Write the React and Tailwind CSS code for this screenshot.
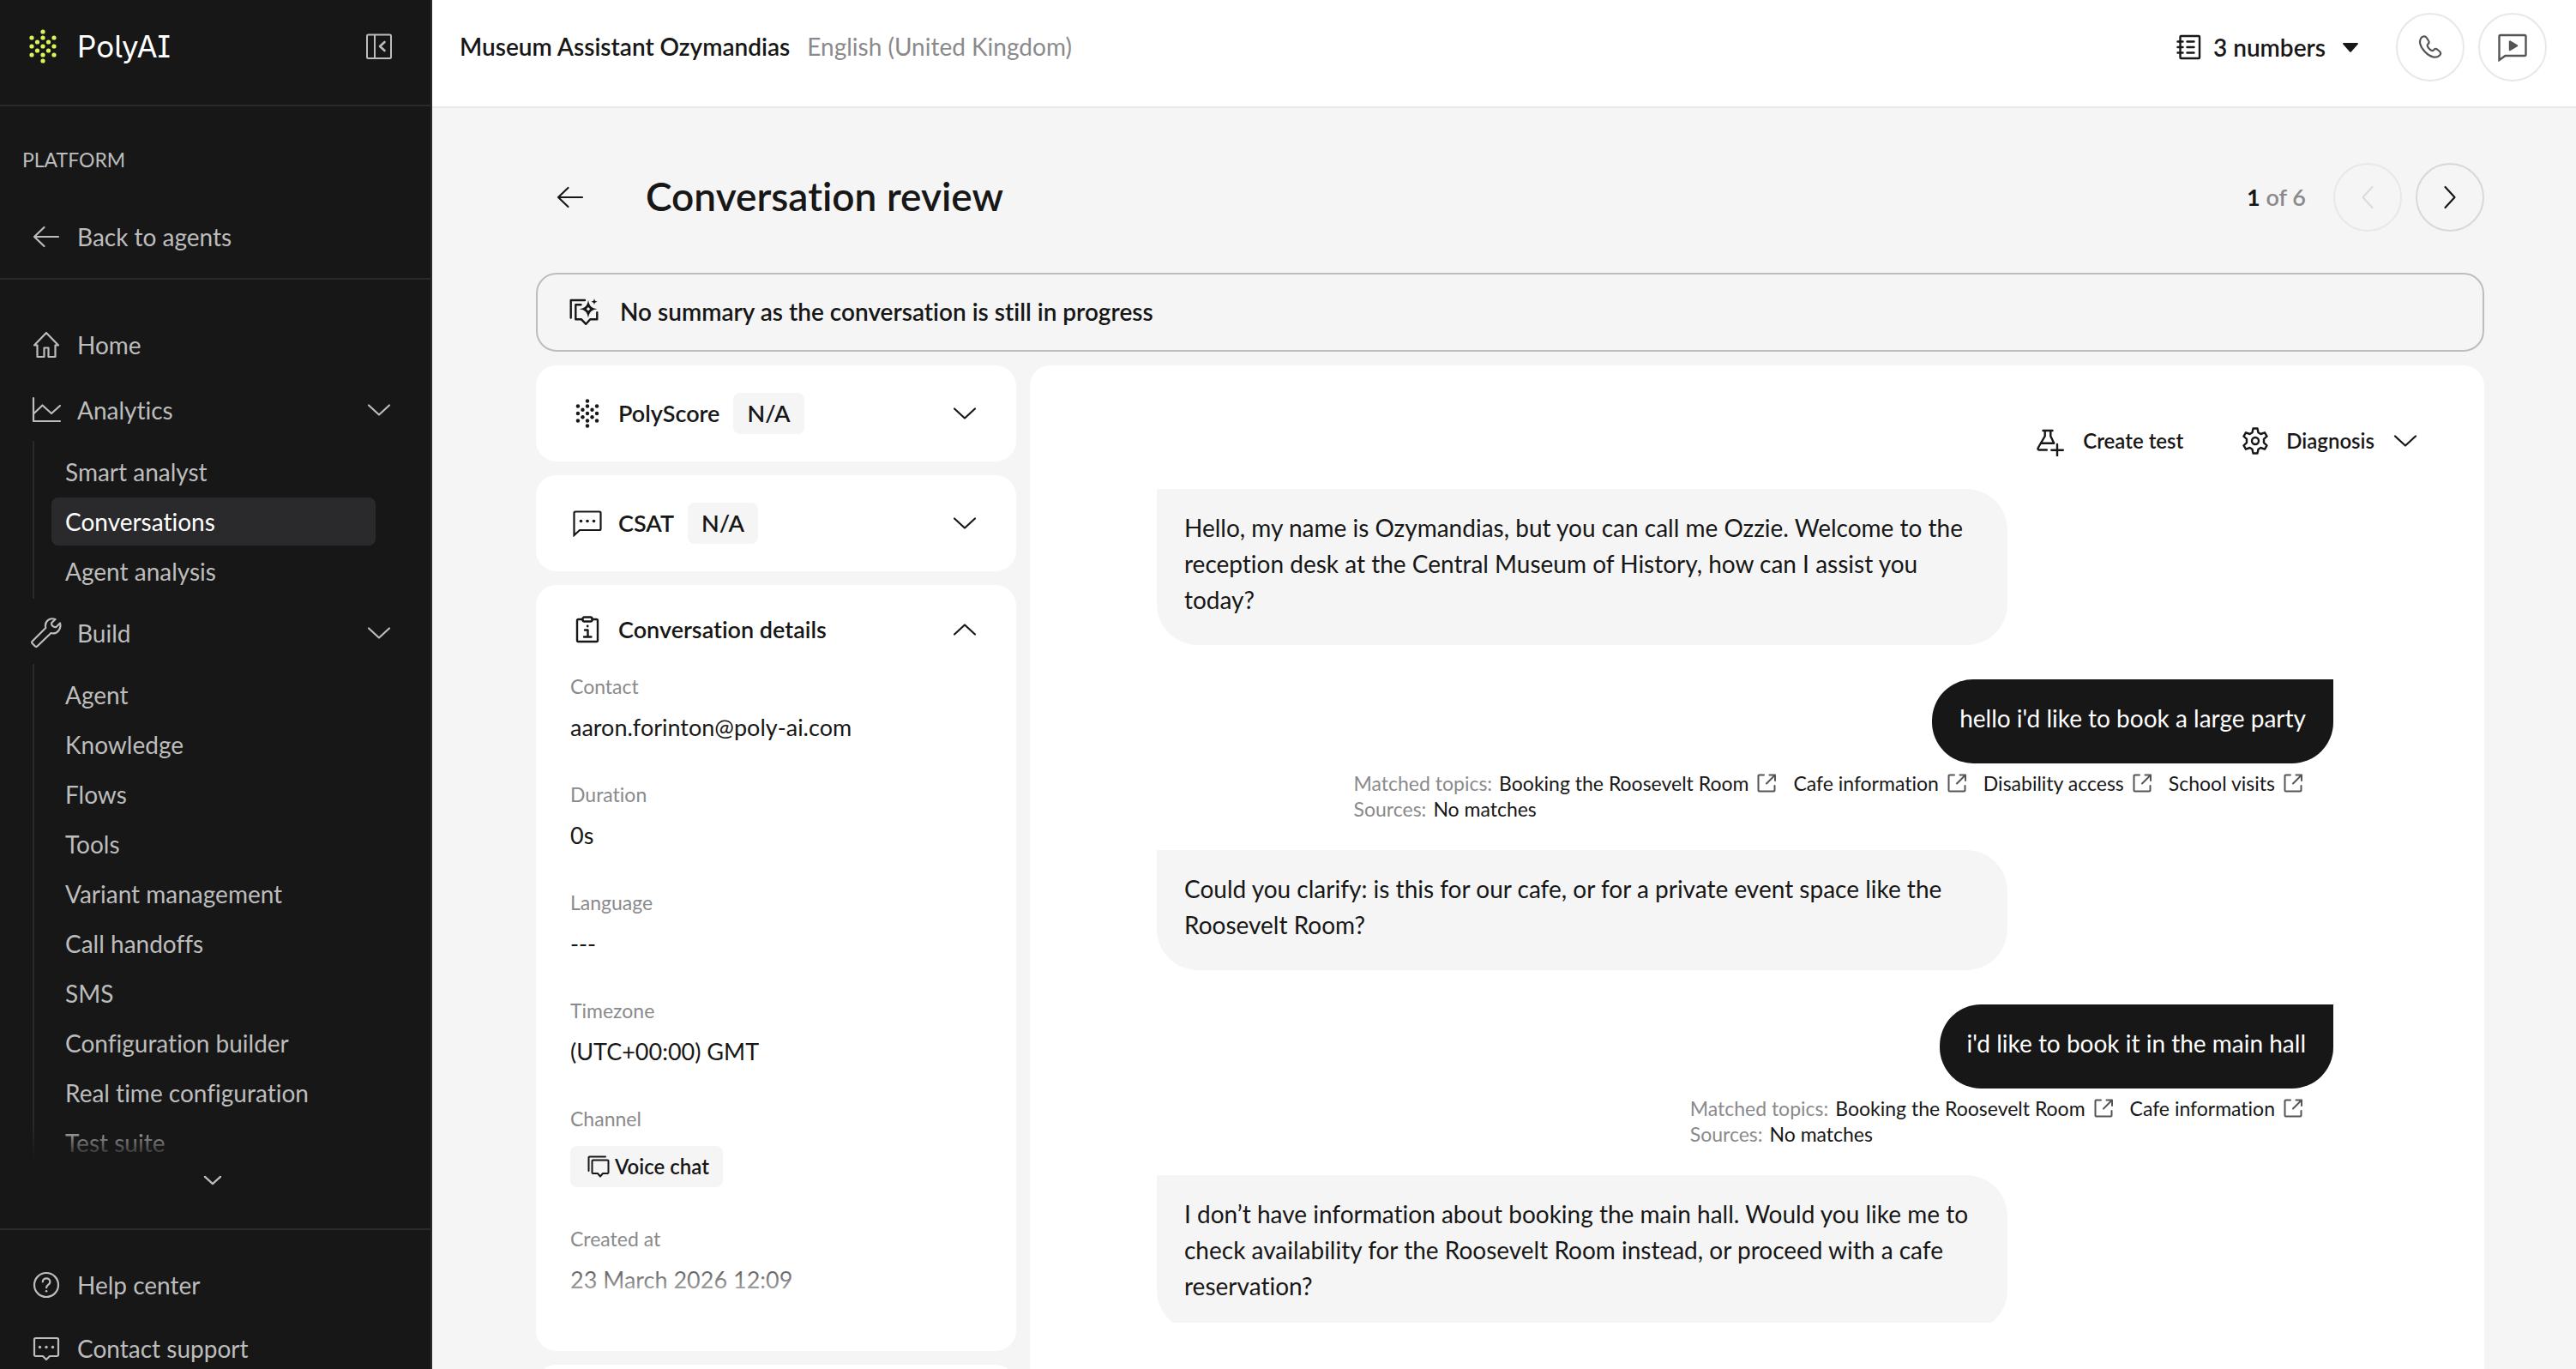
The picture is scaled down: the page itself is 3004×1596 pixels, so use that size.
import React from "react";

const buildLinks = [
    "Agent",
    "Knowledge",
    "Flows",
    "Tools",
    "Variant management",
    "Call handoffs",
    "SMS",
    "Configuration builder",
    "Real time configuration",
    "Test suite",
];

const details = [
    { label: "Contact", value: "aaron.forinton@poly-ai.com" },
    { label: "Duration", value: "0s" },
    { label: "Language", value: "---" },
    { label: "Timezone", value: "(UTC+00:00) GMT" },
    { label: "Channel", value: "Voice chat", badge: true },
    { label: "Created at", value: "23 March 2026 12:09" },
];

const messages = [
    {
        from: "agent",
        text: "Hello, my name is Ozymandias, but you can call me Ozzie. Welcome to the reception desk at the Central Museum of History, how can I assist you today?",
    },
    {
        from: "user",
        text: "hello i'd like to book a large party",
        topics: ["Booking the Roosevelt Room", "Cafe information", "Disability access", "School visits"],
    },
    {
        from: "agent",
        text: "Could you clarify: is this for our cafe, or for a private event space like the Roosevelt Room?",
    },
    {
        from: "user",
        text: "i'd like to book it in the main hall",
        topics: ["Booking the Roosevelt Room", "Cafe information"],
    },
    {
        from: "agent",
        text: "I don’t have information about booking the main hall. Would you like me to check availability for the Roosevelt Room instead, or proceed with a cafe reservation?",
    },
];

/* ---------- Icons ---------- */

function Icon({ w = 32, h = 32, box, stroke = 3, className = "", children }) {
    return (
        <svg
            width={w}
            height={h}
            viewBox={box || `0 0 ${w} ${h}`}
            fill="none"
            stroke="currentColor"
            strokeWidth={stroke}
            strokeLinecap="round"
            strokeLinejoin="round"
            className={`shrink-0 ${className}`}
            aria-hidden="true"
        >
            {children}
        </svg>
    );
}

const dots = [
    [20, 3], [20, 10], [20, 20], [20, 30], [20, 37],
    [7, 10], [7, 20], [7, 30], [33, 10], [33, 20], [33, 30],
    [13.5, 15], [13.5, 25], [26.5, 15], [26.5, 25],
];

function DotsIcon({ size = 40, className }) {
    return (
        <Icon w={size} h={size} box="0 0 40 40" className={className}>
            {dots.map(([x, y]) => (
                <circle key={`${x}-${y}`} cx={x} cy={y} r="2.6" fill="currentColor" stroke="none" />
            ))}
        </Icon>
    );
}

function CollapseIcon() {
    return (
        <Icon stroke={2}>
            <rect x="2" y="2.500" width="28" height="27.500" rx="1.5" />
            <path d="M11 3v27" />
            <path d="M22.500 11l-5.500 5 5.500 5" strokeWidth="2.6" />
        </Icon>
    );
}

function ArrowLeftIcon() {
    return (
        <Icon stroke={2.2}>
            <path d="M30 16H2M13.5 5L2 16l11.5 11" />
        </Icon>
    );
}

function HomeIcon() {
    return (
        <Icon stroke={2.2}>
            <path d="M16 2L2 16.5h3.5V30h8V19.5h5V30h8V16.5H30L16 2z" />
        </Icon>
    );
}

function ChartIcon() {
    return (
        <Icon w={36} h={32} stroke={2.2}>
            <path d="M3 2v27h31" />
            <path d="M3.5 20L13.500 10.500 24 20l10-9" />
        </Icon>
    );
}

function WrenchIcon() {
    return (
        <Icon w={36} h={36} stroke={2.2}>
            <path d="M28.500 2C22-.5 15.500 4 17.300 12L1.800 27.500a2 2 0 0 0 0 2.800l3 3a2 2 0 0 0 2.800 0L23.500 18c7 2 12.500-5 10.500-11.500l-4.500 4.500c-3 1-6.500-2.500-5-5.200L28.500 2z" />
        </Icon>
    );
}

function ChevronDown({ className = "" }) {
    return (
        <Icon w={32} h={32} stroke={2.2} className={className}>
            <path d="M4 10.500l12 11 12-11" />
        </Icon>
    );
}

function HelpIcon() {
    return (
        <Icon stroke={2.2}>
            <circle cx="16" cy="16" r="14" />
            <path d="M11.800 12.500c0-5.500 8.600-5.500 8.600 0 0 3.200-4.300 3-4.300 6.700" />
            <circle cx="16.100" cy="23.200" r="1.300" fill="currentColor" stroke="none" />
        </Icon>
    );
}

function SupportIcon() {
    return (
        <Icon stroke={2.2}>
            <path d="M3.500 4h25a1.500 1.500 0 0 1 1.500 1.500v18a1.500 1.500 0 0 1-1.500 1.500H20l-4 4-4-4H3.500A1.500 1.500 0 0 1 2 23.500v-18A1.500 1.500 0 0 1 3.500 4z" />
            <g fill="currentColor" stroke="none">
                <circle cx="8.500" cy="14.500" r="1.700" />
                <circle cx="16" cy="14.500" r="1.700" />
                <circle cx="23.500" cy="14.500" r="1.700" />
            </g>
        </Icon>
    );
}

function NumbersIcon() {
    return (
        <Icon w={32} h={32} stroke={2.4}>
            <rect x="5.500" y="3" width="22.500" height="26" rx="1" />
            <path d="M2.500 9.500h6M2.500 16h6M2.500 22.500h6M13.500 9.500h8M13.500 16h8M13.500 22.500h8" />
        </Icon>
    );
}

function PhoneIcon() {
    return (
        <Icon w={28} h={28} stroke={2.2}>
            <path d="M4 2.500C.5 6 1.500 13 8 19.500c6 6.500 13 8 17 4 1.500-1.500 1.300-3.200 0-4.500l-3-2.500c-1.500-1-3-.6-4 .8-1 1.400-3.200.7-5-1.300-2.200-2.300-3-4.300-1.800-5.300 1.500-1.200 1.800-2.700.8-4.200L9.800 3C8.300.8 5.700.8 4 2.500z" />
        </Icon>
    );
}

function ChatPlayIcon() {
    return (
        <Icon w={36} h={34} stroke={2.4}>
            <path d="M2.500 32V4.500A1.500 1.500 0 0 1 4 3h28a1.500 1.500 0 0 1 1.500 1.500v21A1.500 1.500 0 0 1 32 27H9.500l-7 5z" strokeLinejoin="miter" />
            <path d="M15 10.500v9.500l8-4.700z" fill="currentColor" />
        </Icon>
    );
}

function SummaryIcon() {
    return (
        <Icon w={36} h={34} box="7 12 36 34" stroke={2.4}>
            <path d="M9.700 35.500V15H26" />
            <path d="M21.500 20.300h-6.200v17H22l5.300 5.500 5-5.500h8v-8" />
            <path
                d="M30 14.800c1 6.700 3.800 9.500 10.500 10.500-6.700 1-9.500 3.800-10.500 10.500-1-6.700-3.800-9.500-10.500-10.500 6.700-1 9.500-3.800 10.500-10.500zm0 8.300l-2.200 2.200 2.200 2.200 2.200-2.200-2.200-2.200z"
                fill="currentColor"
                fillRule="evenodd"
                stroke="none"
            />
            <path d="M37 13c.4 2.500 1.200 3.300 3.700 3.700-2.500.4-3.300 1.200-3.700 3.700-.4-2.500-1.200-3.300-3.700-3.700 2.500-.4 3.300-1.200 3.700-3.700z" fill="currentColor" stroke="none" />
        </Icon>
    );
}

function CsatIcon() {
    return (
        <Icon w={36} h={32} stroke={2.2}>
            <path d="M2.500 30V4A1.500 1.500 0 0 1 4 2.500h28A1.500 1.500 0 0 1 33.500 4v18.500A1.500 1.500 0 0 1 32 24H9l-6.500 6z" strokeLinejoin="miter" />
            <g fill="currentColor" stroke="none">
                <circle cx="10.500" cy="13.500" r="1.800" />
                <circle cx="18" cy="13.500" r="1.800" />
                <circle cx="25.500" cy="13.500" r="1.800" />
            </g>
        </Icon>
    );
}

function ClipboardIcon() {
    return (
        <Icon w={28} h={32} stroke={2.4}>
            <path d="M8 4H3.500A1.500 1.500 0 0 0 2 5.500v23A1.500 1.500 0 0 0 3.500 30h21a1.500 1.500 0 0 0 1.500-1.500v-23A1.500 1.500 0 0 0 24.500 4H20" />
            <rect x="8.500" y="1.500" width="11" height="5" rx="2" />
            <path d="M11 16.500h3.500v8M10 24.500h8.500" />
            <circle cx="14.200" cy="12" r="1.400" fill="currentColor" stroke="none" />
        </Icon>
    );
}

function BeakerIcon() {
    return (
        <Icon w={36} h={36} box="12 14 36 36" stroke={2.4}>
            <path d="M21.500 20h11M23.700 20v6.500L15.800 40c-.8 1.500 0 2.500 1.500 2.500h8.500M30.300 20v6.500l4 8.200H19" />
            <path d="M38 36v13.500M31.300 42.700h13.500" />
        </Icon>
    );
}

function GearIcon() {
    return (
        <Icon w={32} h={34} box="0 0 32 34" stroke={2.4}>
            <path d="M13.500 2.500h5l1 4.800 2.800 1.700 4.700-1.700 2.500 4.400-3.500 3.200v4.200l3.500 3.200-2.500 4.400-4.700-1.700-2.800 1.700-1 4.800h-5l-1-4.800-2.800-1.700L5 26.700l-2.500-4.400L6 19.100v-4.200l-3.500-3.200L5 7.300 9.700 9l2.800-1.700 1-4.800z" />
            <circle cx="16" cy="17" r="4" />
        </Icon>
    );
}

function VoiceChatIcon() {
    return (
        <Icon w={26} h={26} stroke={2}>
            <path d="M1.500 18V2.500a1 1 0 0 1 1-1H21" />
            <path d="M6.500 5.500h17a1 1 0 0 1 1 1V20a1 1 0 0 1-1 1H18l-3 3.500-3-3.500H6.500a1 1 0 0 1-1-1V6.500a1 1 0 0 1 1-1z" />
        </Icon>
    );
}

function ExternalIcon() {
    return (
        <Icon w={22} h={22} stroke={2} className="text-[#555558]">
            <path d="M8 1.500H2.500a1 1 0 0 0-1 1v17a1 1 0 0 0 1 1h17a1 1 0 0 0 1-1V14M14.500 1.500h6.500V8M21 1.500L11 11.500" />
        </Icon>
    );
}

/* ---------- Sidebar ---------- */

function NavRow({ icon, label, expandable }) {
    const body = (
        <>
            <span className="flex w-9 shrink-0 justify-center">{icon}</span>
            <span className="flex-1 text-left">{label}</span>
            {expandable && <ChevronDown />}
        </>
    );
    const styles = "flex h-18 w-full shrink-0 items-center gap-[18px] pl-9 pr-11";
    return expandable ? (
        <button type="button" aria-expanded="true" className={styles}>{body}</button>
    ) : (
        <a href="#" className={styles}>{body}</a>
    );
}

function SubNav({ items, active }) {
    return (
        <ul className="ml-[38px] flex flex-col gap-0.5 border-l-2 border-[#2a2a2c] pt-2 pb-1 pl-5 pr-16">
            {items.map((item) => (
                <li key={item}>
                    <a
                        href="#"
                        className={
                            item === active
                                ? "flex h-14 items-center rounded-lg bg-[#2a2a2c] px-4 text-white"
                                : "flex h-14 items-center px-4"
                        }
                    >
                        {item}
                    </a>
                </li>
            ))}
        </ul>
    );
}

function Sidebar() {
    return (
        <aside className="flex h-full w-[504px] shrink-0 flex-col border-r-2 border-[#2a2a2c] bg-[#171717] text-[28px] leading-9 text-[#bdbdbd]">
            <div className="flex h-31 shrink-0 items-center justify-between border-b-2 border-[#2a2a2c] pb-3.5 pl-[30px] pr-11">
                <a href="#" className="flex items-center gap-5">
                    <DotsIcon size={40} className="text-[#dcf45a]" />
                    <span className="font-['Inter',sans-serif] text-[35px] text-white [font-feature-settings:'cv05','cv08']">PolyAI</span>
                </a>
                <button type="button" aria-label="Collapse sidebar">
                    <CollapseIcon />
                </button>
            </div>

            <div className="shrink-0 border-b-2 border-[#2a2a2c] pt-12 pb-3">
                <p className="mb-10 pl-[26px] text-[23px] leading-7">PLATFORM</p>
                <NavRow icon={<ArrowLeftIcon />} label="Back to agents" />
            </div>

            <nav className="flex min-h-0 flex-1 flex-col pt-10">
                <div className="relative min-h-0 flex-1 overflow-hidden">
                    <div className="flex flex-col gap-1">
                        <NavRow icon={<HomeIcon />} label="Home" />
                        <div>
                            <NavRow icon={<ChartIcon />} label="Analytics" expandable />
                            <SubNav items={["Smart analyst", "Conversations", "Agent analysis"]} active="Conversations" />
                        </div>
                        <div>
                            <NavRow icon={<WrenchIcon />} label="Build" expandable />
                            <SubNav items={buildLinks} />
                        </div>
                    </div>
                    <div className="absolute inset-x-0 bottom-0 h-10 bg-linear-to-t from-[#171717] to-transparent" />
                </div>
                <button type="button" aria-label="Show more" className="mb-8 flex h-12 w-full items-center justify-center pr-1.5">
                    <ChevronDown className="h-6 w-6 stroke-3" />
                </button>
            </nav>

            <div className="flex h-41 shrink-0 flex-col gap-0.5 overflow-hidden border-t-2 border-[#2a2a2c] pt-7">
                <NavRow icon={<HelpIcon />} label="Help center" />
                <NavRow icon={<SupportIcon />} label="Contact support" />
            </div>
        </aside>
    );
}

/* ---------- Main ---------- */

function RoundButton({ label, disabled, className, children }) {
    return (
        <button
            type="button"
            aria-label={label}
            disabled={disabled}
            className={`flex h-20 w-20 items-center justify-center rounded-full border-2 ${className}`}
        >
            {children}
        </button>
    );
}

function TopBar() {
    return (
        <header className="flex shrink-0 items-center justify-between border-b-2 border-[#e8e8e8] bg-white pt-[15px] pb-[29px] pl-8 pr-[34px]">
            <p className="flex gap-5 pb-0.5 text-[28px] leading-9">
                <span className="font-semibold">Museum Assistant Ozymandias</span>
                <span className="text-[#8a8a8c]">English (United Kingdom)</span>
            </p>
            <div className="flex items-center gap-4">
                <button type="button" className="mr-7 flex items-center gap-3 text-[28px] font-semibold">
                    <NumbersIcon />
                    3 numbers
                    <svg width="18" height="11" viewBox="0 0 18 11" className="ml-2" aria-hidden="true">
                        <path d="M1 0h16c1 0 1.300.8.700 1.500l-7.700 8.800c-.6.7-1.400.7-2 0L.3 1.500C-.3.8 0 0 1 0z" fill="currentColor" />
                    </svg>
                </button>
                <RoundButton label="Call" className="border-[#e8e8e8] text-[#555558]">
                    <PhoneIcon />
                </RoundButton>
                <RoundButton label="Chat" className="border-[#e8e8e8] text-[#555558]">
                    <ChatPlayIcon />
                </RoundButton>
            </div>
        </header>
    );
}

function CardHeader({ icon, title, score, open }) {
    return (
        <button
            type="button"
            aria-expanded={!!open}
            className={`flex w-full items-center pl-10 pr-11 text-[27px] font-semibold leading-9 ${open ? "h-26" : "h-28"}`}
        >
            <span className="mr-4 flex w-10 justify-center">{icon}</span>
            {title}
            {score && <span className="ml-4 flex h-12 items-center rounded-lg bg-[#f5f5f5] px-4">{score}</span>}
            <ChevronDown className={open ? "ml-auto rotate-180" : "ml-auto"} />
        </button>
    );
}

function DetailsPanel() {
    return (
        <div className="flex w-[560px] shrink-0 flex-col gap-4">
            <section className="shrink-0 rounded-3xl bg-white">
                <CardHeader icon={<DotsIcon size={34} />} title="PolyScore" score="N/A" />
            </section>
            <section className="shrink-0 rounded-3xl bg-white">
                <CardHeader icon={<CsatIcon />} title="CSAT" score="N/A" />
            </section>
            <section className="shrink-0 rounded-3xl bg-white pb-10">
                <CardHeader icon={<ClipboardIcon />} title="Conversation details" open />
                <div className="relative max-h-[749px] overflow-hidden">
                    <dl className="px-10">
                        {details.map(({ label, value, badge }) => (
                            <div key={label} className="mb-11">
                                <dt className="text-[23px] leading-7 text-[#8a8a8c]">{label}</dt>
                                {badge ? (
                                    <dd className="flex pt-[18px] pb-0.5">
                                        <span className="flex h-12 items-center gap-1.5 rounded-lg bg-[#f5f5f5] pl-5 pr-4 text-2xl font-semibold">
                                            <VoiceChatIcon />
                                            {value}
                                        </span>
                                    </dd>
                                ) : (
                                    <dd className="mt-3.5 text-[27px] leading-10">{value}</dd>
                                )}
                            </div>
                        ))}
                    </dl>
                    <div className="absolute inset-x-0 bottom-0 h-20 bg-linear-to-t from-white to-transparent" />
                </div>
            </section>
            <section className="h-28 shrink-0 rounded-3xl bg-white" />
        </div>
    );
}

function Message({ from, text, topics }) {
    if (from === "agent") {
        return (
            <p className="max-w-[992px] shrink-0 self-start rounded-[48px] rounded-tl-none bg-[#f5f5f5] px-8 pt-6 pb-8">
                {text}
            </p>
        );
    }
    return (
        <div className="-mb-[7px] flex shrink-0 flex-col items-end self-end">
            <p className="rounded-[48px] rounded-tr-none bg-[#171717] px-8 pt-6 pb-8 text-white">{text}</p>
            <div className="pt-2 pr-9 text-[23px] leading-[30px]">
                <div className="flex gap-5">
                    <span className="-mr-3 text-[#8a8a8c]">Matched topics:</span>
                    {topics.map((topic) => (
                        <a key={topic} href="#" className="flex items-center gap-2.5">
                            {topic}
                            <ExternalIcon />
                        </a>
                    ))}
                </div>
                <p className="flex gap-2">
                    <span className="text-[#8a8a8c]">Sources:</span>
                    <span>No matches</span>
                </p>
            </div>
        </div>
    );
}

function ChatPanel() {
    return (
        <section className="flex min-w-0 flex-1 flex-col rounded-t-3xl bg-white pt-16 pb-[54px]">
            <div className="mb-8 flex h-12 shrink-0 items-center justify-end pr-[76px] text-2xl font-semibold">
                <button type="button" className="mr-[68px] flex items-center gap-5">
                    <BeakerIcon />
                    Create test
                </button>
                <button type="button" className="flex items-center gap-5">
                    <GearIcon />
                    Diagnosis
                    <ChevronDown />
                </button>
            </div>
            <div className="flex min-h-0 flex-1 flex-col gap-10 overflow-hidden pl-[148px] pr-44 text-[28px] leading-[42px]">
                {messages.map((message) => (
                    <Message key={message.text} {...message} />
                ))}
            </div>
        </section>
    );
}

export default function App() {
    return (
        <div className="flex h-screen overflow-hidden bg-[#f5f5f5] font-['Lato',sans-serif] text-[#171717] [font-variant-ligatures:no-common-ligatures]">
            <Sidebar />
            <div className="flex min-w-0 flex-1 flex-col">
                <TopBar />
                <main className="flex min-h-0 flex-1 flex-col pt-16 pl-[121px] pr-[107px]">
                    <div className="flex h-20 shrink-0 items-center">
                        <button type="button" aria-label="Back" className="mr-12 flex w-20 justify-center">
                            <ArrowLeftIcon />
                        </button>
                        <h1 className="pb-1 text-[46px] font-semibold">Conversation review</h1>
                        <div className="ml-auto flex items-center gap-4">
                            <p className="mr-4 text-[27px] font-semibold text-[#8a8a8c]">
                                <span className="font-bold text-[#171717]">1</span> of 6
                            </p>
                            <RoundButton label="Previous conversation" disabled className="border-[#e8e8e8] text-[#dcdcdc]">
                                <ChevronDown className="rotate-90" />
                            </RoundButton>
                            <RoundButton label="Next conversation" className="border-[#d8d8d8]">
                                <ChevronDown className="-rotate-90" />
                            </RoundButton>
                        </div>
                    </div>

                    <div className="mt-12 mb-4 flex h-23 shrink-0 items-center gap-6 rounded-3xl border-2 border-[#bdbdbd] px-9">
                        <SummaryIcon />
                        <p className="pb-0.5 text-[28px] font-semibold">No summary as the conversation is still in progress</p>
                    </div>

                    <div className="flex min-h-0 flex-1 gap-4">
                        <DetailsPanel />
                        <ChatPanel />
                    </div>
                </main>
            </div>
        </div>
    );
}
